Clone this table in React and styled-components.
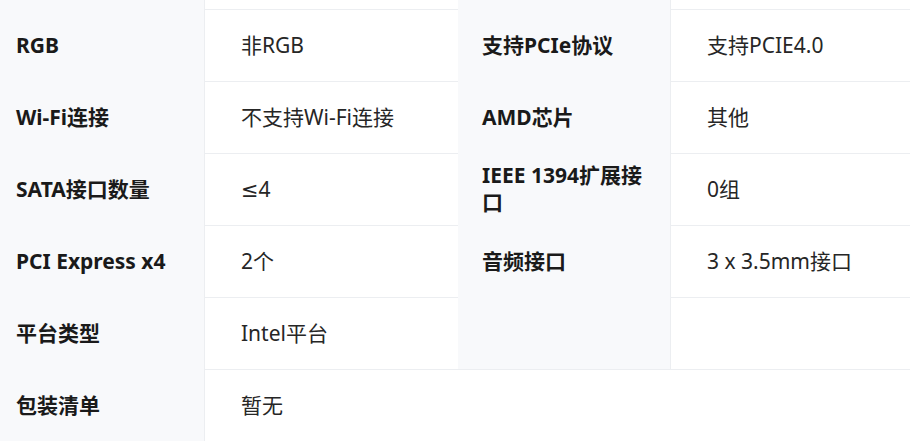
import React from "react";
import styled, { createGlobalStyle } from "styled-components";

const GlobalStyle = createGlobalStyle`
  html, body {
    margin: 0;
    padding: 0;
    background: #ffffff;
    overflow: hidden;
  }
  body {
    font-family: "Noto Sans", "DejaVu Sans", "Noto Sans CJK SC", sans-serif;
  }
`;

const Viewport = styled.div`
  width: 910px;
  height: 441px;
  overflow: hidden;
`;

const SpecGrid = styled.div`
  display: grid;
  grid-template-columns: 213px 253px 213px 253px;
  grid-auto-rows: 72px;
  width: 932px;
  margin: -63px 0 0 -8px;
`;

const Label = styled.div`
  box-sizing: border-box;
  display: flex;
  align-items: center;
  padding: 0 22px 0 24px;
  background: #f8f9fb;
  border-right: 1px solid #eceef1;
  font-family: "Noto Sans", "DejaVu Sans", "Noto Sans CJK SC", sans-serif;
  font-size: 21px;
  font-weight: 700;
  line-height: 27px;
  color: #1a1a1a;
`;

const Value = styled.div`
  box-sizing: border-box;
  display: flex;
  align-items: center;
  padding: 0 36px;
  border-top: 1px solid #eceef1;
  font-family: "Noto Sans", "DejaVu Sans", "Noto Sans CJK SC", sans-serif;
  font-size: 21px;
  font-weight: 400;
  line-height: 27px;
  color: #262626;
  grid-column: ${(p) => (p.$span ? `span ${p.$span}` : "auto")};
`;

const rows = [
  [["", ""], ["", ""]],
  [["RGB", "非RGB"], ["支持PCIe协议", "支持PCIE4.0"]],
  [["Wi-Fi连接", "不支持Wi-Fi连接"], ["AMD芯片", "其他"]],
  [["SATA接口数量", "≤4"], ["IEEE 1394扩展接口", "0组"]],
  [["PCI Express x4", "2个"], ["音频接口", "3 x 3.5mm接口"]],
  [["平台类型", "Intel平台"], ["", ""]],
];

export default function App() {
  return (
    <Viewport>
      <GlobalStyle />
      <SpecGrid>
        {rows.map((row, i) =>
          row.map(([label, value], j) => (
            <React.Fragment key={`${i}-${j}`}>
              <Label>{label}</Label>
              <Value>{value}</Value>
            </React.Fragment>
          ))
        )}
        <Label>包装清单</Label>
        <Value $span={3}>暂无</Value>
      </SpecGrid>
    </Viewport>
  );
}
